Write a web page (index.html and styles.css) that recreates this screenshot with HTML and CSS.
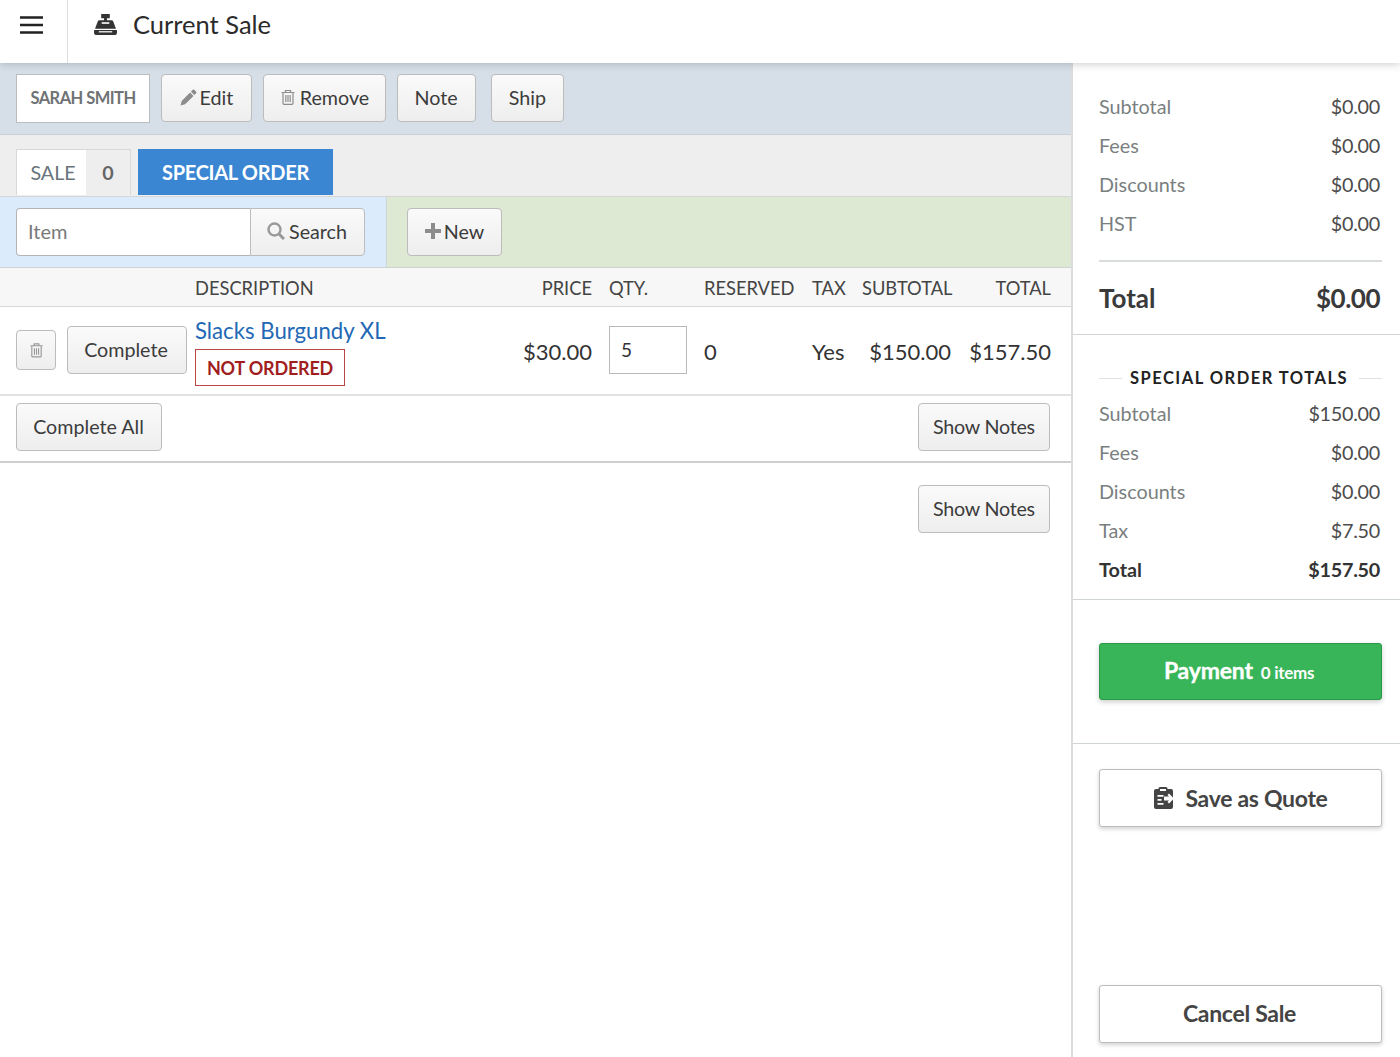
FILE: index.html
```html
<!DOCTYPE html>
<html lang="en">
<head>
<meta charset="utf-8">
<title>Current Sale</title>
<link rel="stylesheet" href="styles.css">
</head>
<body>
<header class="topbar">
  <div class="burger-cell">
    <svg class="burger" viewBox="0 0 23 18"><path d="M0 1.500h23M0 9h23M0 16.500h23" stroke="#222" stroke-width="2.400" fill="none"/></svg>
  </div>
  <div class="title-wrap">
    <svg class="register" viewBox="0 0 24 22"><path fill="#333" d="M7.500 0h9v4.500h-3V6.500H18.500a1.600 1.600 0 0 1 1.500 1.100L23 15.500H1L4 7.600A1.600 1.600 0 0 1 5.500 6.500h5V4.500h-3z"/><path fill="#fff" d="M8 8.600h8v1.700H8z"/><path fill="#333" d="M0 16.800h24V20a2 2 0 0 1-2 2H2a2 2 0 0 1-2-2z"/><path fill="#fff" d="M5 18h14v1.300H5z"/></svg>
    <h1 class="title">Current Sale</h1>
  </div>
</header>
<div class="layout">
  <main class="content">
    <div class="toolbar">
      <div class="customer">SARAH SMITH</div>
      <button class="btn btn-edit"><svg class="ico ico-pencil" viewBox="0 0 16 16"><path fill="#8c8c8c" d="M12 .8a1 1 0 0 1 1.400 0l1.800 1.800a1 1 0 0 1 0 1.400l-1.700 1.700-3.200-3.200zM9.500 3.300l3.200 3.200-7.900 7.900L.5 15.500l1.100-4.300z"/></svg>Edit</button>
      <button class="btn btn-remove"><svg class="ico" viewBox="0 0 16 16"><path fill="none" stroke="#8c8c8c" stroke-width="1.200" d="M1.500 3.500h13M5.500 3.300V1.500h5v1.800M3 3.500v10.800c0 .6.400 1 1 1h8c.6 0 1-.4 1-1V3.500M5.800 6v7M8 6v7M10.200 6v7"/></svg>Remove</button>
      <button class="btn btn-note">Note</button>
      <button class="btn btn-ship">Ship</button>
    </div>
    <div class="tabs">
      <div class="tab-sale"><span class="tab-label">SALE</span><span class="tab-count">0</span></div>
      <div class="tab-special">SPECIAL ORDER</div>
    </div>
    <div class="entry">
      <div class="entry-search">
        <div class="search-group">
          <div class="search-input">Item</div>
          <button class="btn btn-search"><svg class="ico ico-search" viewBox="0 0 18 18"><circle cx="7.500" cy="7.500" r="6" fill="none" stroke="#999" stroke-width="2.400"/><path d="M12 12l5 5" stroke="#999" stroke-width="3"/></svg>Search</button>
        </div>
      </div>
      <div class="entry-new">
        <button class="btn btn-new"><svg class="ico ico-plus" viewBox="0 0 16 16"><path d="M8 0v16M0 8h16" stroke="#8c8c8c" stroke-width="4"/></svg>New</button>
      </div>
    </div>
    <div class="cols cols-head">
      <div></div>
      <div>DESCRIPTION</div>
      <div class="price">PRICE</div>
      <div>QTY.</div>
      <div>RESERVED</div>
      <div>TAX</div>
      <div class="right">SUBTOTAL</div>
      <div class="right">TOTAL</div>
    </div>
    <div class="cols cols-row">
      <div class="row-actions">
        <button class="btn btn-trash"><svg class="ico-trash" viewBox="0 0 16 16"><path fill="none" stroke="#999" stroke-width="1.200" d="M1.500 3.500h13M5.500 3.300V1.500h5v1.800M3 3.500v10.800c0 .6.400 1 1 1h8c.6 0 1-.4 1-1V3.500M5.800 6v7M8 6v7M10.200 6v7"/></svg></button>
        <button class="btn btn-complete">Complete</button>
      </div>
      <div class="desc">
        <a class="item-link" href="#">Slacks Burgundy XL</a>
        <span class="badge">NOT ORDERED</span>
      </div>
      <div class="price">$30.00</div>
      <div class="qty-cell"><div class="qty">5</div></div>
      <div>0</div>
      <div>Yes</div>
      <div class="right">$150.00</div>
      <div class="right">$157.50</div>
    </div>
    <div class="row-foot">
      <button class="btn btn-all">Complete All</button>
      <button class="btn btn-notes">Show Notes</button>
    </div>
    <div class="notes-foot">
      <button class="btn btn-notes">Show Notes</button>
    </div>
  </main>
  <aside class="side">
    <section class="sum sum-main">
      <div class="line"><span>Subtotal</span><b>$0.00</b></div>
      <div class="line"><span>Fees</span><b>$0.00</b></div>
      <div class="line"><span>Discounts</span><b>$0.00</b></div>
      <div class="line"><span>HST</span><b>$0.00</b></div>
      <div class="grand"><span>Total</span><span class="grand-value">$0.00</span></div>
    </section>
    <section class="sum sum-special">
      <div class="sum-title"><span>SPECIAL ORDER TOTALS</span></div>
      <div class="line"><span>Subtotal</span><b>$150.00</b></div>
      <div class="line"><span>Fees</span><b>$0.00</b></div>
      <div class="line"><span>Discounts</span><b>$0.00</b></div>
      <div class="line"><span>Tax</span><b>$7.50</b></div>
      <div class="line line-total"><span>Total</span><b>$157.50</b></div>
    </section>
    <section class="pay-wrap">
      <button class="pay"><span class="pay-label">Payment</span><span class="pay-items">0 items</span></button>
    </section>
    <section class="actions">
      <button class="wide wide-quote"><svg class="ico-quote" viewBox="0 0 21 22"><path fill="#444" d="M7 0h6a1.500 1.500 0 0 1 1.500 1.500V2H18a2 2 0 0 1 2 2v16a2 2 0 0 1-2 2H3a2 2 0 0 1-2-2V4a2 2 0 0 1 2-2h2.500v-.5A1.500 1.500 0 0 1 7 0z"/><path fill="#fff" d="M7 2h6v2H7zM4.500 8h6v1.800h-6zM4.500 12h4v1.800h-4zM4.500 16h6v1.800h-6z"/><path fill="#fff" d="M16 6.500l5 5-5 5-1.500-1.500L16 13.500h-5v-4h5L14.500 8z"/></svg>Save as Quote</button>
      <button class="wide wide-cancel">Cancel Sale</button>
    </section>
  </aside>
</div>
</body>
</html>
```

FILE: styles.css
```css
* { box-sizing: border-box; }
html, body { margin: 0; height: 100%; }
body {
  display: flex;
  flex-direction: column;
  height: 1057px;
  overflow: hidden;
  font-family: Lato, "Open Sans", sans-serif;
  color: #333;
  background: #fff;
}
button { font-family: inherit; }

.topbar {
  position: relative;
  z-index: 2;
  display: flex;
  height: 63px;
  flex: none;
  background: #fff;
  box-shadow: 0 1px 8px rgba(60, 70, 80, .28);
}
.burger-cell {
  width: 68px;
  padding: 16px 0 0 20px;
  border-right: 1px solid #ddd;
}
.burger { display: block; width: 23px; height: 18px; }
.title-wrap { display: flex; align-items: flex-start; padding: 14px 0 0 26px; }
.register { width: 23px; height: 21px; margin-right: 16px; }
.title { margin: -4px 0 0; font-size: 25.500px; line-height: 28px; font-weight: 400; color: #2b2b2b; }

.layout { flex: 1; display: flex; min-height: 0; }
.content { width: 1073px; flex: none; border-right: 2px solid #dcdcdc; }
.side { flex: 1; display: flex; flex-direction: column; min-width: 0; }

.btn {
  display: inline-flex;
  align-items: center;
  justify-content: center;
  height: 48px;
  padding: 0 0 2px;
  border: 1px solid #bcbcbc;
  border-radius: 4px;
  background: linear-gradient(#fafafa, #eeeeee);
  color: #3c3c3c;
  font-size: 19.700px;
}
.ico { width: 16px; height: 16px; margin-right: 4px; }
.ico-pencil { width: 17px; height: 17px; margin-right: 3px; }

.toolbar {
  display: flex;
  align-items: flex-start;
  height: 72px;
  padding: 11px 0 0 16px;
  background: #d6dfe8;
  border-bottom: 1px solid #c9d0d6;
}
.customer {
  width: 134px;
  height: 49px;
  margin-right: 11px;
  padding-bottom: 1px;
  display: flex;
  align-items: center;
  justify-content: center;
  background: #fff;
  border: 1px solid #b9bdc0;
  font-size: 16.500px;
  font-weight: 700;
  letter-spacing: -.55px;
  color: #6f7375;
}
.btn-edit { width: 91px; margin-right: 11px; }
.btn-remove { width: 123px; margin-right: 11px; }
.btn-note { width: 79px; margin-right: 15px; padding-right: 1px; }
.btn-ship { width: 73px; }

.tabs {
  display: flex;
  align-items: flex-end;
  height: 62px;
  padding: 0 0 1px 16px;
  background: #eeeeee;
  border-bottom: 1px solid #d6d6d6;
}
.tab-sale {
  display: flex;
  width: 115px;
  height: 46px;
  margin-right: 7px;
  border: 1px solid #d8d8d8;
  border-bottom: 0;
  font-size: 19.700px;
}
.tab-label { width: 69px; padding-left: 3px; display: flex; align-items: center; justify-content: center; background: #fff; color: #68747c; }
.tab-count { flex: 1; display: flex; align-items: center; justify-content: center; font-weight: 700; color: #666; }
.tab-special {
  width: 195px;
  height: 46px;
  display: flex;
  align-items: center;
  justify-content: center;
  background: #3b86d2;
  color: #fff;
  font-size: 20px;
  font-weight: 700;
  letter-spacing: -.3px;
}

.entry { display: flex; height: 71px; border-bottom: 1px solid #cfd2d2; }
.entry-search {
  width: 387px;
  padding: 11px 0 0 16px;
  background: #dcebfb;
  border-right: 1px solid #cfd6d6;
}
.search-group { display: flex; width: 349px; }
.search-input {
  width: 234px;
  height: 48px;
  padding: 0 0 2px 11px;
  display: flex;
  align-items: center;
  background: #fff;
  border: 1px solid #b4b4b4;
  border-right: 0;
  border-radius: 4px 0 0 4px;
  font-size: 20px;
  color: #7a7a7a;
}
.btn-search { width: 115px; padding-right: 1px; border-radius: 0 4px 4px 0; }
.ico-search { width: 18px; height: 18px; }
.entry-new { flex: 1; padding: 11px 0 0 20px; background: #dee9d3; }
.btn-new { width: 95px; }
.ico-plus { margin-right: 3px; }

.cols {
  display: grid;
  grid-template-columns: 179px 314px 100px 95px 108px 50px 89px 100px;
  padding-left: 16px;
  align-items: center;
}
.cols-head {
  height: 39px;
  padding-top: 2px;
  background: #f7f7f7;
  border-bottom: 1px solid #d8d8d8;
  font-size: 18.300px;
  color: #444;
}
.cols-row {
  height: 89px;
  padding-top: 2px;
  border-bottom: 2px solid #e2e2e2;
  font-size: 22px;
  color: #333;
}
.price { text-align: right; padding-right: 17px; }
.right { text-align: right; }
.row-actions { display: flex; align-items: center; gap: 11px; margin-bottom: 4px; }
.btn-trash { width: 40px; height: 40px; padding: 0; }
.ico-trash { width: 15px; height: 16px; }
.btn-complete { width: 120px; padding: 0 2px 0 0; }
.desc { display: flex; flex-direction: column; align-items: flex-start; }
.item-link { font-size: 22.200px; line-height: 28px; color: #2268b5; text-decoration: none; }
.badge {
  margin-top: 4px;
  width: 150px;
  height: 37px;
  display: flex;
  align-items: center;
  justify-content: center;
  border: 1px solid #bb4444;
  color: #a11e1e;
  font-size: 18px;
  font-weight: 700;
  letter-spacing: -.2px;
}
.qty-cell { margin-bottom: 4px; }
.qty {
  width: 78px;
  height: 48px;
  padding: 0 0 0 11px;
  display: flex;
  align-items: center;
  border: 1px solid #b9b9b9;
  font-size: 19px;
}

.row-foot {
  display: flex;
  justify-content: space-between;
  height: 67px;
  padding: 7px 21px 0 16px;
  border-bottom: 2px solid #cfcfcf;
}
.btn-all { width: 146px; padding-right: 1px; }
.btn-notes { width: 132px; letter-spacing: -.25px; }
.notes-foot { display: flex; justify-content: flex-end; padding: 22px 21px 0 0; }

.sum { padding: 0 18px 0 26px; border-bottom: 1px solid #cfd4d6; }
.sum-main { height: 272px; padding-top: 23px; }
.sum-special { height: 265px; padding-top: 29px; }
.line {
  display: flex;
  justify-content: space-between;
  height: 39px;
  padding-right: 2px;
  align-items: center;
  font-size: 19.800px;
  color: #7a7f80;
}
.line b { font-weight: 400; color: #4c4c4c; letter-spacing: -.27px; }
.line-total, .line-total b { font-weight: 700; color: #333; }
.grand {
  display: flex;
  justify-content: space-between;
  align-items: center;
  height: 73px;
  margin-top: 18px;
  padding-right: 2px;
  border-top: 2px solid #d8dcdc;
  font-size: 26px;
  font-weight: 700;
  color: #3a3a3a;
}
.grand-value { letter-spacing: -.5px; }
.sum-title {
  display: flex;
  align-items: center;
  height: 28px;
  margin-bottom: 1px;
  font-size: 16.500px;
  font-weight: 700;
  letter-spacing: 1.500px;
  color: #222;
}
.sum-title::before, .sum-title::after { content: ""; flex: 1; height: 1px; background: #dfe2e2; }
.sum-title span { padding: 0 11px 0 8px; }
.pay-wrap { height: 144px; padding: 43px 18px 0 26px; border-bottom: 1px solid #cfd4d6; }
.pay {
  width: 283px;
  height: 57px;
  padding: 0 3px 3px 0;
  border: 1px solid #2a9a48;
  border-radius: 3px;
  background: #38b558;
  color: #fff;
  box-shadow: 0 2px 5px rgba(0, 0, 0, .2);
}
.pay-label { font-size: 23px; font-weight: 700; letter-spacing: -.2px; margin-right: 8px; -webkit-text-stroke: .3px #fff; }
.pay-items { font-size: 17px; font-weight: 700; letter-spacing: -.3px; }
.actions { flex: 1; display: flex; flex-direction: column; justify-content: space-between; padding: 25px 18px 14px 26px; }
.wide {
  width: 283px;
  height: 58px;
  display: flex;
  align-items: center;
  justify-content: center;
  background: #fff;
  border: 1px solid #b9bdbd;
  border-radius: 3px;
  box-shadow: 0 2px 4px rgba(0, 0, 0, .18);
  font-size: 23px;
  font-weight: 700;
  letter-spacing: -.3px;
  color: #444;
}
.wide-quote { padding: 0; }
.wide-cancel { padding: 0 2px 2px 0; }
.ico-quote { width: 21px; height: 22px; margin-right: 11px; }
```
